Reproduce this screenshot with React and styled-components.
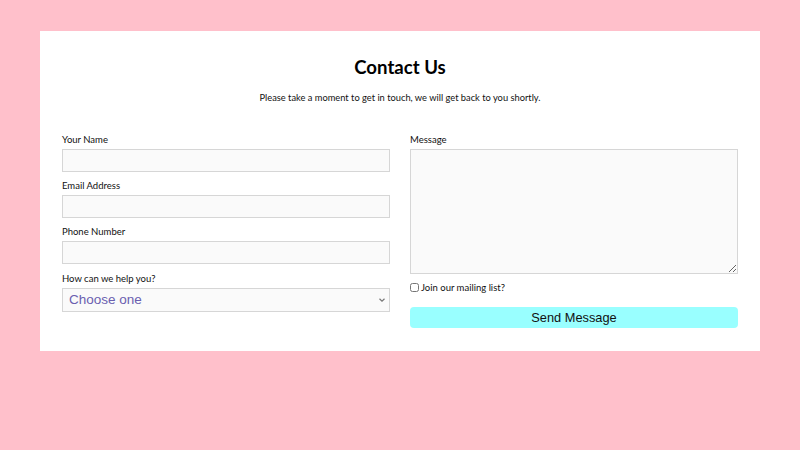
import { createGlobalStyle, styled } from "styled-components";

const GlobalStyle = createGlobalStyle`
  html, body {
    margin: 0;
    padding: 0;
    background: #ffc0cb;
  }
  body {
    font-family: "Lato", "Open Sans", sans-serif;
  }
`;

const chevron =
  "url(\"data:image/svg+xml,%3Csvg xmlns='http://www.w3.org/2000/svg' width='8' height='6' viewBox='0 0 8 6'%3E%3Cpath d='M1.5 1.8 L4 4.2 L6.5 1.8' fill='none' stroke='%23777' stroke-width='1.2'/%3E%3C/svg%3E\")";

function App() {
  return (
    <>
      <GlobalStyle />
      <Page>
        <Card>
          <Title>Contact Us</Title>
          <Subtitle>Please take a moment to get in touch, we will get back to you shortly.</Subtitle>
          <FormGrid>
            <Column>
              <Field>
                <Label>Your Name</Label>
                <TextInput type="text" />
              </Field>
              <Field>
                <Label>Email Address</Label>
                <TextInput type="email" />
              </Field>
              <Field>
                <Label>Phone Number</Label>
                <TextInput type="tel" />
              </Field>
              <Field>
                <Label>How can we help you?</Label>
                <Select defaultValue="">
                  <option value="">Choose one</option>
                  <option value="sales">Sales</option>
                  <option value="support">Support</option>
                </Select>
              </Field>
            </Column>
            <Column>
              <Field>
                <Label>Message</Label>
                <MessageArea />
              </Field>
              <CheckRow>
                <CheckBox type="checkbox" />
                Join our mailing list?
              </CheckRow>
              <SendBtn type="button">Send Message</SendBtn>
            </Column>
          </FormGrid>
        </Card>
      </Page>
    </>
  );
}

export default App;

const Page = styled.div`
  width: 800px;
  height: 450px;
  padding: 31px 40px;
  box-sizing: border-box;
`;

const Card = styled.div`
  background: #ffffff;
  height: 320px;
  box-sizing: border-box;
  padding: 24px 22px 0 22px;
  display: flex;
  flex-direction: column;
  align-items: stretch;
`;

const Title = styled.h1`
  margin: 0;
  text-align: center;
  font-size: 18.6px;
  font-weight: 700;
  line-height: 24px;
  color: #000;
`;

const Subtitle = styled.p`
  margin: 12px 0 0 0;
  text-align: center;
  font-size: 9.3px;
  line-height: 14px;
  color: #111;
`;

const FormGrid = styled.div`
  display: grid;
  grid-template-columns: 1fr 1fr;
  column-gap: 20px;
  margin-top: 28px;
`;

const Column = styled.div`
  display: flex;
  flex-direction: column;
`;

const Field = styled.div`
  display: flex;
  flex-direction: column;
  margin-bottom: 7.2px;
`;

const Label = styled.label`
  font-size: 9.5px;
  line-height: 13px;
  color: #111;
  margin-bottom: 3px;
`;

const TextInput = styled.input`
  height: 23px;
  box-sizing: border-box;
  border: 1px solid #d6d6d6;
  background: #fafafa;
  padding: 0 6px;
  margin: 0;
  outline: none;
`;

const Select = styled.select`
  appearance: none;
  -webkit-appearance: none;
  height: 24px;
  box-sizing: border-box;
  border: 1px solid #d6d6d6;
  border-radius: 0;
  background: #fafafa ${chevron} no-repeat right 3px center;
  color: #6a5fb0;
  font-family: "Liberation Sans", Arial, sans-serif;
  font-size: 13.5px;
  padding: 0 4px 0 6px;
  margin: 0;
`;

const MessageArea = styled.textarea`
  height: 125px;
  box-sizing: border-box;
  border: 1px solid #d6d6d6;
  background: #fafafa;
  margin: 0;
  resize: vertical;
`;

const CheckRow = styled.label`
  display: flex;
  align-items: center;
  font-size: 9.5px;
  color: #111;
  margin-top: 1px;
`;

const CheckBox = styled.input`
  width: 9px;
  height: 9px;
  margin: 0 2px 0 0;
`;

const SendBtn = styled.button`
  margin-top: 14px;
  height: 21px;
  border: none;
  border-radius: 4px;
  background: #99ffff;
  color: #111;
  font-family: "Liberation Sans", Arial, sans-serif;
  font-size: 12.8px;
  cursor: pointer;
`;
